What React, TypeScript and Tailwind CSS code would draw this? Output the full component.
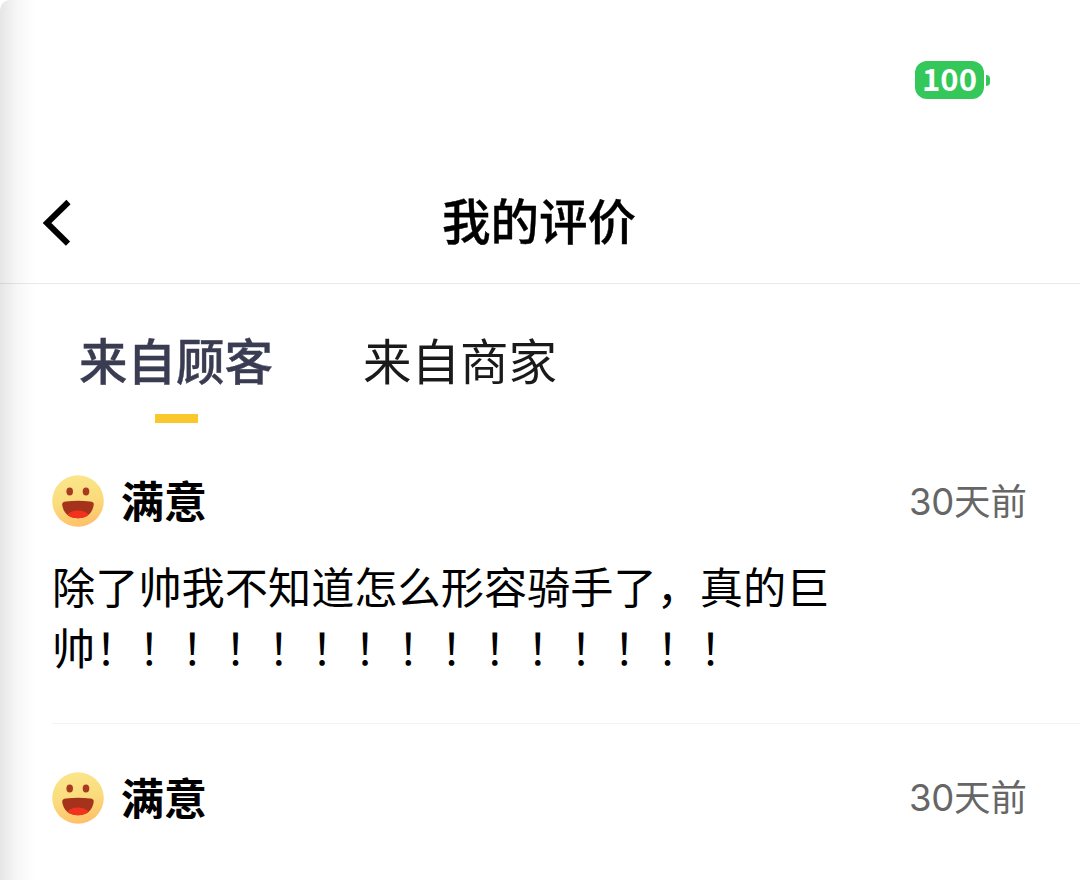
import { clsx } from "clsx";

const reviews = [
  {
    id: 1,
    rating: "满意",
    days: "30",
    text: "除了帅我不知道怎么形容骑手了，真的巨帅！！！！！！！！！！！！！！！",
  },
  { id: 2, rating: "满意", days: "30", text: "" },
];

const tabs = ["来自顾客", "来自商家"];

function Battery() {
  return (
    <div className="flex h-[38px] items-center gap-[2px]">
      <div className="flex h-[38px] w-[69px] items-center justify-center rounded-[12px] bg-[#34c759] pb-[5px] text-[31px] leading-none font-bold text-white">
        <span>100</span>
      </div>
      <div className="h-[11px] w-[4px] rounded-r-full bg-[#34c759]" />
    </div>
  );
}

function BackIcon() {
  return (
    <svg width="32" height="48" viewBox="0 0 32 48" fill="none" stroke="#000" strokeWidth="6">
      <path d="M28.5 4 7 25 28 45.6" />
    </svg>
  );
}

function SmileIcon({ id }: { id: number }) {
  return (
    <svg width="52" height="52" viewBox="0 0 52 52">
      <defs>
        <linearGradient id={`face-${id}`} x1="0.4" y1="0" x2="0.6" y2="1">
          <stop offset="0" stopColor="#fae68b" />
          <stop offset="0.5" stopColor="#fadc7c" />
          <stop offset="1" stopColor="#ffbf68" />
        </linearGradient>
        <clipPath id={`mouth-${id}`}>
          <path d="M10.2 30C10 27.6 11.5 27 14 26.6C22 25.600 30 25.600 38 26.600C40.700 27 42 27.600 41.700 30C40.500 38 35 43.300 26 43.300S11.300 38 10.200 30Z" />
        </clipPath>
      </defs>
      <circle cx="26" cy="26" r="25.800" fill={`url(#face-${id})`} />
      <ellipse cx="17.700" cy="16.500" rx="3.300" ry="3.900" fill="#a93a20" />
      <ellipse cx="34" cy="16.500" rx="3.300" ry="3.900" fill="#a93a20" />
      <g clipPath={`url(#mouth-${id})`}>
        <rect x="8" y="24" width="36" height="20" fill="#a5331c" />
        <ellipse cx="26" cy="43" rx="12" ry="7.500" fill="#f2311f" />
      </g>
    </svg>
  );
}

export default function App() {
  return (
    <div className="relative h-[880px] w-[1080px] overflow-hidden bg-white font-['Noto_Sans_CJK_SC',sans-serif] text-black">
      {/* status bar */}
      <div className="flex h-[160px] items-start justify-end pt-[61px] pr-[90px]">
        <Battery />
      </div>

      <header className="grid h-[124px] grid-cols-[1fr_auto_1fr] items-center border-b border-[#e9e9e9] pl-[40px]">
        <button className="w-8" aria-label="返回">
          <BackIcon />
        </button>
        <h1 className="mr-[42px] pb-[4px] text-[48.500px] leading-none font-medium [-webkit-text-stroke:0.4px_#000]">我的评价</h1>
      </header>

      <nav className="flex h-[146px] gap-[90px] pt-[45px] pl-[79px]">
        {tabs.map((tab, i) => (
          <div key={tab} className="flex flex-col items-center">
            <span
              className={clsx(
                "h-[60px] text-[48.500px] leading-[60px]",
                i === 0 ? "font-medium text-[#3a3c52] [-webkit-text-stroke:0.4px_#3a3c52]" : "text-[#1a1a1a]"
              )}
            >
              {tab}
            </span>
            {i === 0 && <span className="mt-[25px] h-[9px] w-[43px] bg-[#f9c82d]" />}
          </div>
        ))}
      </nav>

      <main className="pl-[52px]">
        {reviews.map((r) => (
          <article key={r.id} className="h-[294px] border-b border-[#f4f4f4] pt-[45px] not-first:h-[200px] not-first:border-0 not-first:pt-[47.500px]">
            <div className="flex h-[52px] items-center pr-[53px]">
              <SmileIcon id={r.id} />
              <span className="ml-[17px] pb-[3px] text-[43px] leading-none font-bold">{r.rating}</span>
              <span className="ml-auto flex items-baseline text-[36.500px] leading-none text-[#666]">
                <span className="font-['Inter'] font-normal tracking-[-0.3px]">{r.days}</span>天前
              </span>
            </div>
            <p className="mt-[28px] w-[790px] text-[43.200px] leading-[61px] break-all">{r.text}</p>
          </article>
        ))}
      </main>

      {/* shade along the left edge */}
      <div className="pointer-events-none absolute inset-y-0 left-0 w-[36px] rounded-tl-[10px] bg-linear-to-r from-black/10 via-black/3 to-transparent" />
    </div>
  );
}
